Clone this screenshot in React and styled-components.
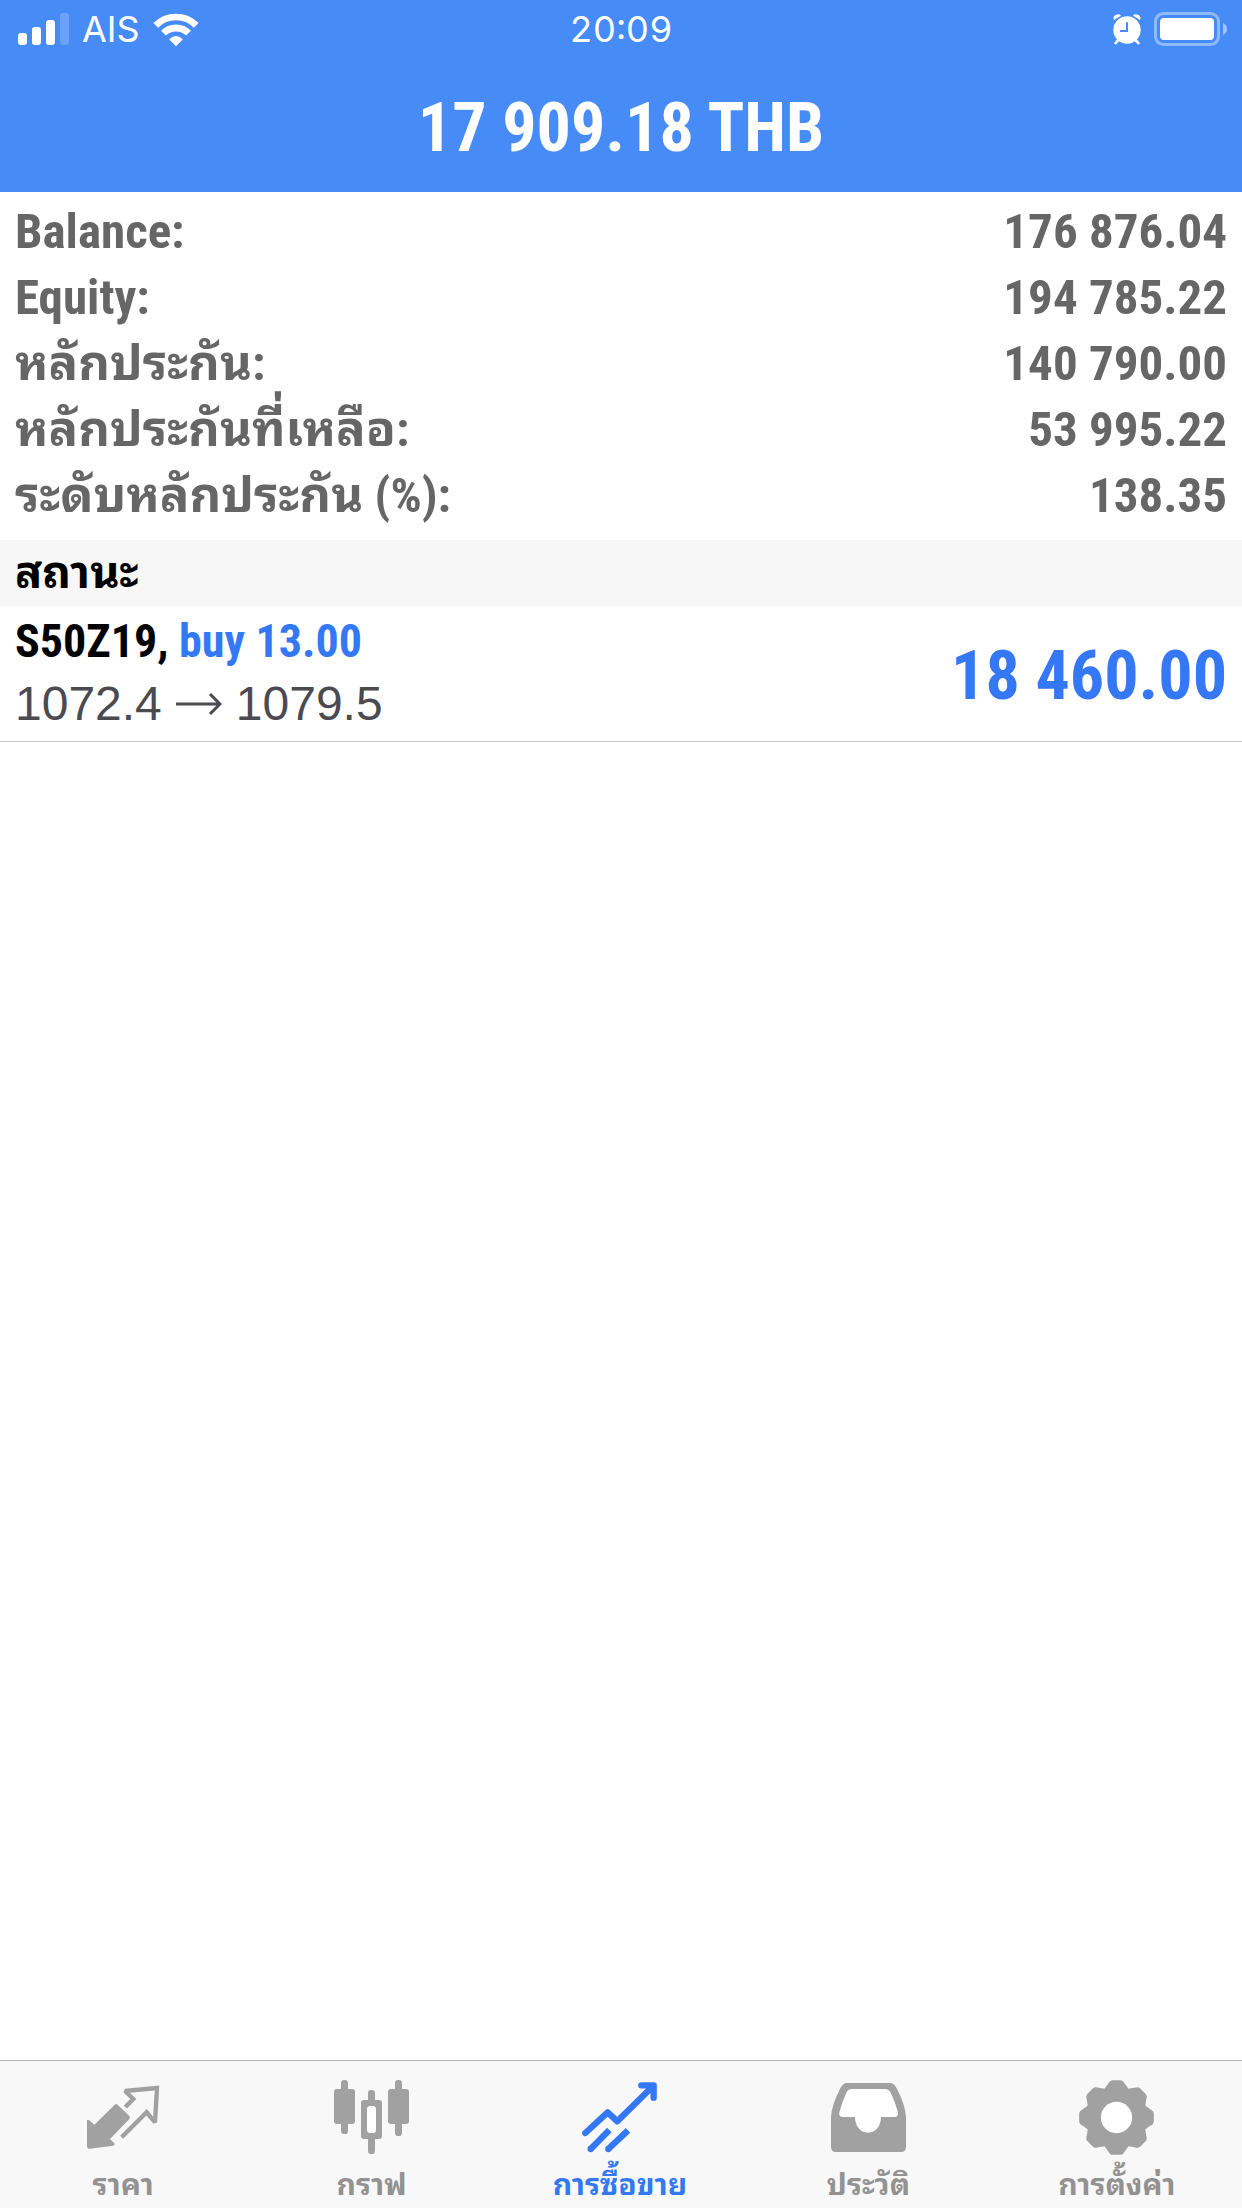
import React, { useState } from "react";
import styled, { createGlobalStyle } from "styled-components";

const summary = [
  { label: "Balance:", value: "176 876.04" },
  { label: "Equity:", value: "194 785.22" },
  { label: "หลักประกัน:", value: "140 790.00" },
  { label: "หลักประกันที่เหลือ:", value: "53 995.22" },
  { label: "ระดับหลักประกัน (%):", value: "138.35" },
];

const positions = [
  {
    symbol: "S50Z19",
    side: "buy 13.00",
    open: "1072.4",
    current: "1079.5",
    profit: "18 460.00",
  },
];

const tabs = [
  { id: "quotes", label: "ราคา", icon: QuotesIcon },
  { id: "chart", label: "กราฟ", icon: ChartIcon },
  { id: "trade", label: "การซื้อขาย", icon: TradeIcon },
  { id: "history", label: "ประวัติ", icon: HistoryIcon },
  { id: "settings", label: "การตั้งค่า", icon: SettingsIcon },
];

export default function App() {
  const [active, setActive] = useState("trade");
  return (
    <Page>
      <GlobalStyle />
      <Header>
        <StatusBar>
          <StatusSide>
            <SignalIcon />
            <span>AIS</span>
            <WifiIcon />
          </StatusSide>
          <Clock>20:09</Clock>
          <StatusSide $end>
            <AlarmIcon />
            <BatteryIcon />
          </StatusSide>
        </StatusBar>
        <Total>17 909.18 THB</Total>
      </Header>

      <Main>
        <Summary>
          {summary.map((item) => (
            <SummaryRow key={item.label}>
              <dt>{item.label}</dt>
              <dd>{item.value}</dd>
            </SummaryRow>
          ))}
        </Summary>
        <SectionTitle>สถานะ</SectionTitle>
        <PositionList>
          {positions.map((item) => (
            <Position key={item.symbol}>
              <div>
                <Deal>
                  {item.symbol}, <Side>{item.side}</Side>
                </Deal>
                <Prices>
                  <span>{item.open}</span>
                  <ArrowIcon />
                  <span>{item.current}</span>
                </Prices>
              </div>
              <Profit>{item.profit}</Profit>
            </Position>
          ))}
        </PositionList>
      </Main>

      <TabBar>
        {tabs.map(({ id, label, icon: Icon }) => (
          <Tab key={id} $active={id === active} onClick={() => setActive(id)}>
            <Icon />
            <TabLabel $active={id === active}>{label}</TabLabel>
          </Tab>
        ))}
      </TabBar>
    </Page>
  );
}

// status bar icons
function SignalIcon() {
  return (
    <svg width="51" height="32" viewBox="0 0 51 32" fill="#fff">
      <rect x="0" y="20" width="9" height="12" rx="3" />
      <rect x="14" y="14" width="9" height="18" rx="3" />
      <rect x="28" y="7" width="9" height="25" rx="3" />
      <rect x="42" y="0" width="9" height="32" rx="3" opacity="0.2" />
    </svg>
  );
}

function WifiIcon() {
  return (
    <svg width="46" height="33" viewBox="0 0 138 100" fill="none" stroke="#fff">
      <path d="M7.5 37.5A87 87 0 0 1 130.500 37.500" strokeWidth="20" />
      <path d="M31 61A54 54 0 0 1 107 61" strokeWidth="21" />
      <path
        d="M69 98L51 80Q69 64 87 80Z"
        fill="#fff"
        strokeWidth="4"
        strokeLinejoin="round"
      />
    </svg>
  );
}

function AlarmIcon() {
  return (
    <svg width="28" height="31" viewBox="0 0 84 93">
      <g stroke="#fff" strokeLinecap="round" strokeWidth="8">
        <path d="M18 76L8 87M66 76L76 87" />
      </g>
      <path d="M3 18Q-2 6 9 2Q19 -2 24 5Z" fill="#fff" />
      <path d="M81 18Q86 6 75 2Q65 -2 60 5Z" fill="#fff" />
      <circle cx="42" cy="48" r="41" fill="#fff" />
      <path d="M42 25V51H21" fill="none" stroke="#478bf7" strokeWidth="6" />
    </svg>
  );
}

function BatteryIcon() {
  return (
    <svg width="74" height="34" viewBox="0 0 74 34">
      <rect
        x="1.500"
        y="1.500"
        width="63"
        height="31"
        rx="8"
        fill="none"
        stroke="#fff"
        strokeOpacity="0.4"
        strokeWidth="3"
      />
      <rect x="6" y="6" width="54" height="22" rx="4" fill="#fff" />
      <path d="M69 11Q73 13 73 17Q73 21 69 23Z" fill="#fff" opacity="0.5" />
    </svg>
  );
}

function ArrowIcon() {
  return (
    <svg width="46" height="22" viewBox="0 0 46 22" fill="none">
      <path d="M0 11H44M34 1L44 11L34 21" stroke="#4a4a50" strokeWidth="3" />
    </svg>
  );
}

// tab bar icons
function QuotesIcon() {
  return (
    <TabIcon viewBox="0 0 225 225">
      <path
        fill="currentColor"
        d="M3 120L9 120L25 134L86 74Q90 70 95 74L130 108Q134 112 130 117L72 177L85 190Q88 195 82 197L12 206Q3 207 3 198Z"
      />
      <path
        fill="none"
        stroke="currentColor"
        strokeWidth="13"
        strokeMiterlimit="1.6"
        d="M118 81L142 57L117 33L213 24L207 127L182 97L107 172"
      />
    </TabIcon>
  );
}

function ChartIcon() {
  return (
    <TabIcon viewBox="0 0 225 225">
      <g fill="currentColor">
        <rect x="21" y="0" width="21" height="162" rx="10" />
        <rect x="0" y="27" width="63" height="105" rx="9" />
        <rect x="102" y="30" width="21" height="192" rx="10" />
        <rect x="81" y="60" width="63" height="117" rx="9" />
        <rect x="183" y="0" width="21" height="168" rx="10" />
        <rect x="162" y="27" width="63" height="105" rx="9" />
      </g>
      <rect x="99" y="78" width="27" height="81" rx="10" fill="#fff" />
    </TabIcon>
  );
}

function TradeIcon() {
  return (
    <TabIcon viewBox="0 0 225 225">
      <g fill="none" stroke="currentColor" strokeWidth="19">
        <path
          strokeLinecap="round"
          strokeLinejoin="round"
          d="M10 159L77 97L106 124L214 17M178 16H215V53"
        />
        <path d="M26 207L82 150M79 207L138 151" />
      </g>
      <g fill="currentColor">
        <circle cx="26" cy="207" r="9.500" />
        <circle cx="79" cy="207" r="9.500" />
      </g>
    </TabIcon>
  );
}

function HistoryIcon() {
  return (
    <TabIcon viewBox="0 0 225 225">
      <path
        fill="currentColor"
        d="M0 112Q1 78 28 25Q36 9 48 9H177Q189 9 197 25Q224 78 225 112V201Q225 216 210 216H15Q0 216 0 201Z"
      />
      <path
        fill="#fff"
        d="M25 97Q33 66 46 38Q51 27 63 27H162Q174 27 179 38Q193 66 201 97Q203 111 190 111H150C150 138 134 158 111 158C88 158 72 138 72 111H36Q22 111 25 97Z"
      />
    </TabIcon>
  );
}

function SettingsIcon() {
  return (
    <TabIcon viewBox="-112.500 -112.500 225 225" fill="currentColor">
      {[0, 45, 90, 135, 180, 225, 270, 315].map((angle) => (
        <path
          key={angle}
          transform={`rotate(${angle})`}
          d="M0 0L-39 -78L-36 -86L-25 -101Q-20 -112 -11 -112H11Q20 -112 25 -101L36 -86L39 -78Z"
        />
      ))}
      <circle r="89" />
      <circle r="47" fill="#fff" />
    </TabIcon>
  );
}

const GlobalStyle = createGlobalStyle`
  * {
    box-sizing: border-box;
  }
  body {
    margin: 0;
    background-color: #fff;
    font-family: "Roboto Condensed", "Liberation Sans", "Noto Sans Thai Looped", "Loma", "Garuda", "Noto Sans Thai", sans-serif;
  }
  svg {
    display: block;
    flex-shrink: 0;
  }
`;

const Page = styled.div`
  display: flex;
  flex-direction: column;
  min-height: 100vh;
`;

const Header = styled.header`
  background-color: #478bf7;
  color: #fff;
`;

const StatusBar = styled.div`
  display: grid;
  grid-template-columns: 1fr auto 1fr;
  align-items: center;
  height: 58px;
  padding: 0 14px;
  font-family: Inter, "Liberation Sans", sans-serif;
  font-size: 36px;
`;

const StatusSide = styled.div`
  display: flex;
  align-items: center;
  justify-content: ${(props) => (props.$end ? "flex-end" : "flex-start")};
  gap: 13px;
  padding-left: 4px;
`;

const Clock = styled.time`
  font-variant-numeric: tabular-nums;
`;

const Total = styled.h1`
  margin: 0;
  padding-top: 6px;
  text-align: center;
  font-size: 68px;
  line-height: 128px;
  font-weight: 700;
`;

const Main = styled.main`
  flex: 1;
`;

const Summary = styled.dl`
  margin: 0;
  padding: 7px 15px 11px;
  color: #666;
  font-size: 49px;
  line-height: 66px;
  font-weight: 700;
`;

const SummaryRow = styled.div`
  display: flex;
  justify-content: space-between;
  height: 66px;
  dd {
    margin: 0;
  }
`;

const SectionTitle = styled.h2`
  margin: 0;
  padding: 0 15px;
  height: 66px;
  background-color: #f7f7f7;
  color: #000;
  font-size: 45px;
  line-height: 66px;
  font-weight: 700;
`;

const PositionList = styled.ul`
  margin: 0;
  padding: 0;
  list-style: none;
`;

const Position = styled.li`
  display: flex;
  align-items: center;
  justify-content: space-between;
  padding: 4px 15px 6px;
  border-bottom: 1px solid #c8c7cc;
`;

const Deal = styled.div`
  color: #000;
  font-size: 46px;
  line-height: 62px;
  font-weight: 700;
`;

const Side = styled.span`
  color: #3478f6;
`;

const Prices = styled.div`
  display: flex;
  align-items: center;
  gap: 14px;
  color: #4a4a50;
  font-family: "Liberation Sans", Arial, sans-serif;
  font-size: 48px;
  line-height: 63px;
`;

const Profit = styled.div`
  padding-top: 6px;
  color: #3478f6;
  font-size: 68px;
  line-height: 80px;
  font-weight: 700;
`;

const TabBar = styled.nav`
  position: sticky;
  bottom: 0;
  display: grid;
  grid-template-columns: repeat(5, 1fr);
  border-top: 1px solid #b2b2b2;
  background-color: #f8f8f8;
`;

const Tab = styled.button`
  display: flex;
  flex-direction: column;
  align-items: center;
  gap: 9px;
  padding: 19px 2px 2px 0;
  border: none;
  background: none;
  font-family: inherit;
  cursor: pointer;
  color: ${(props) => (props.$active ? "#3478f6" : "#a1a1a1")};
`;

const TabIcon = styled.svg`
  width: 75px;
  height: 75px;
`;

const TabLabel = styled.span`
  color: ${(props) => (props.$active ? "#3478f6" : "#929292")};
  font-size: 30px;
  line-height: 42px;
  font-weight: 700;
`;
